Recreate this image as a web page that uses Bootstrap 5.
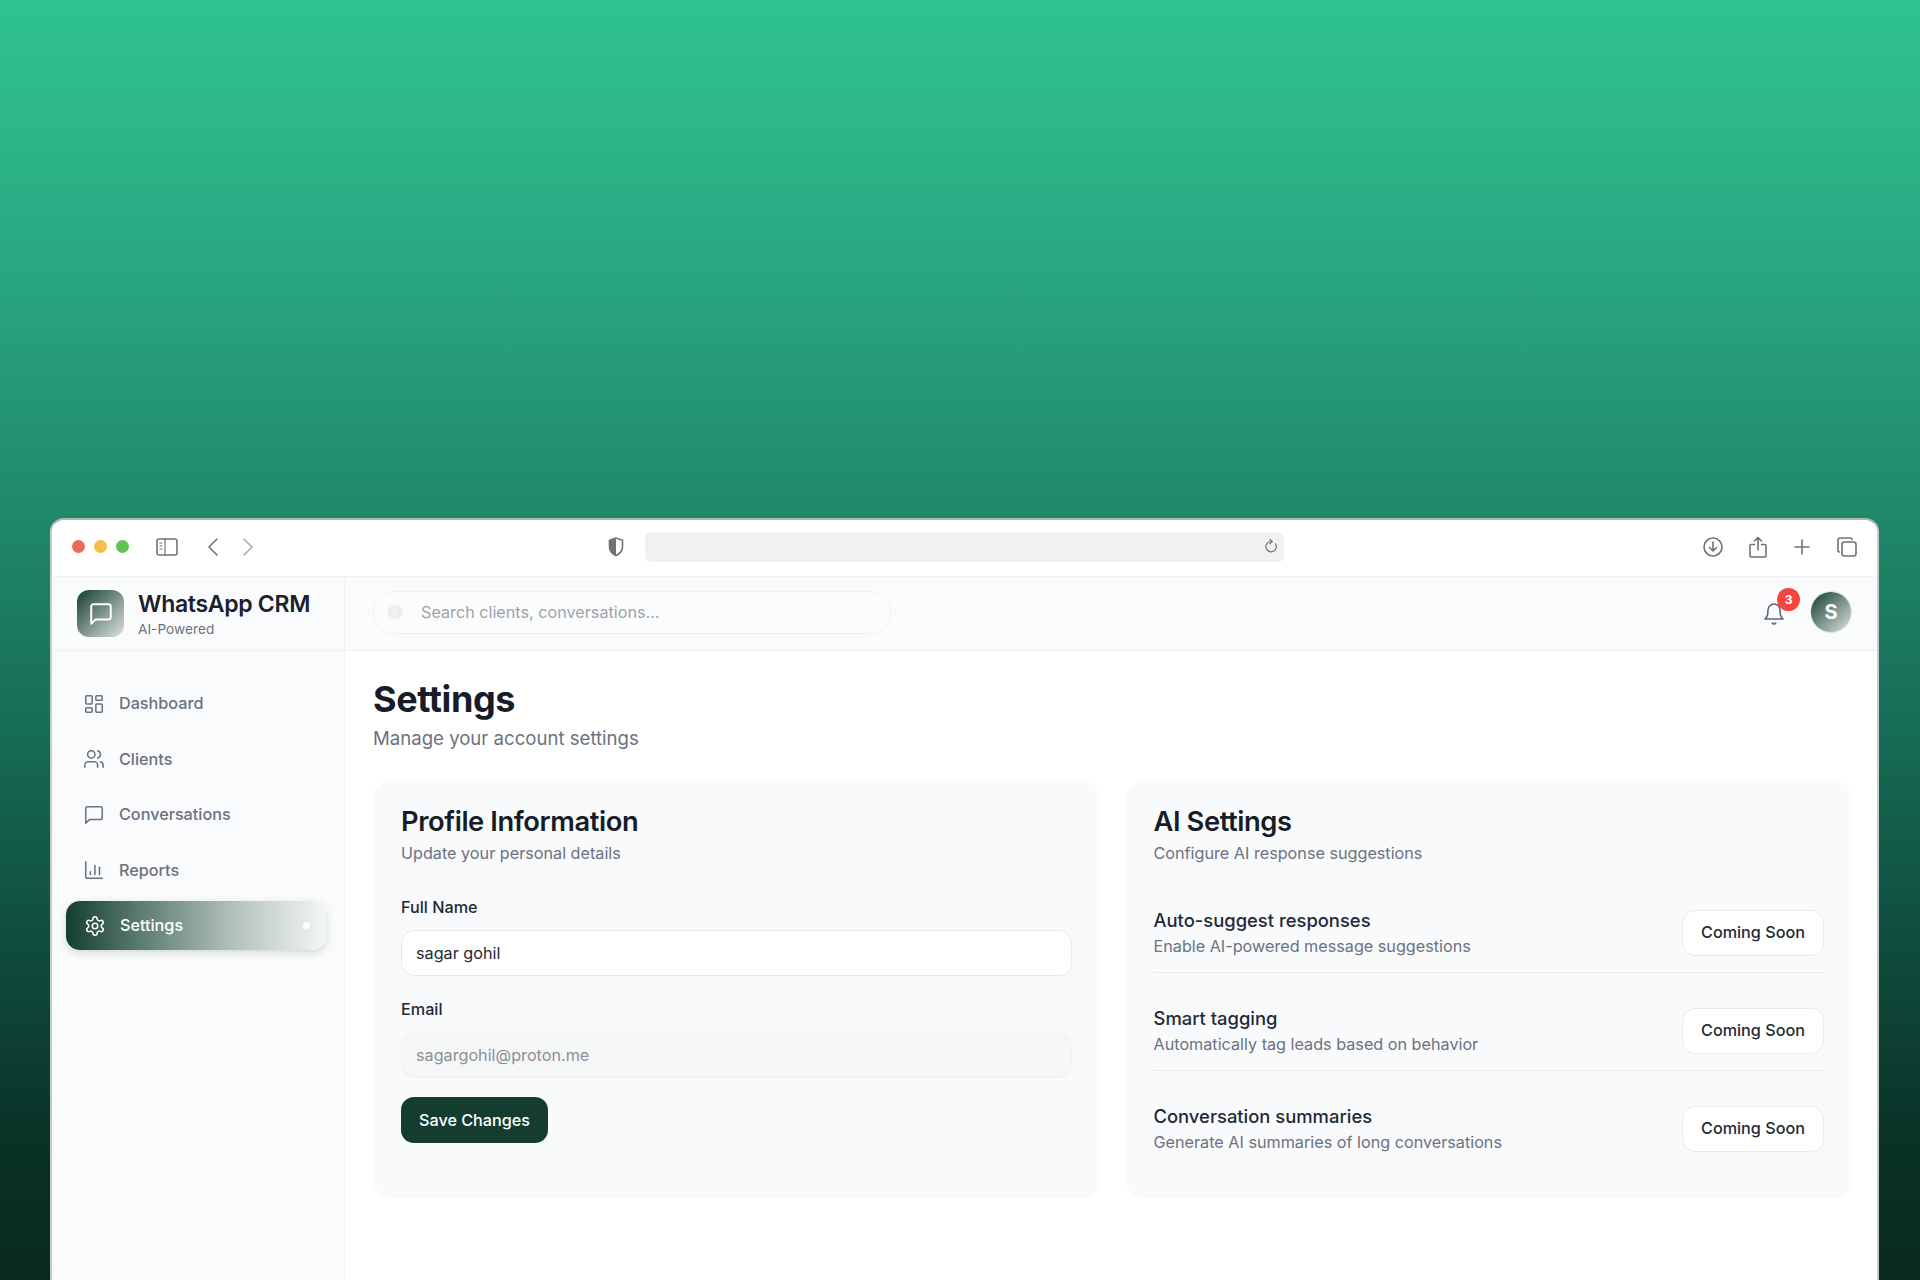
<!DOCTYPE html>
<html lang="en">
<head>
    <meta charset="UTF-8">
    <meta name="viewport" content="width=device-width, initial-scale=1.0">
    <title>Settings - WhatsApp CRM</title>
    <link href="https://cdn.jsdelivr.net/npm/bootstrap@5.3.2/dist/css/bootstrap.min.css" rel="stylesheet">
    <style>
        html, body { height: 1280px; overflow: hidden; }
        body {
            font-family: Inter, "Liberation Sans", sans-serif;
            background: linear-gradient(180deg, #2fc292 0%, #2bb086 15%, #269c78 28%, #1f8769 41%, #176e56 56%, #105040 72%, #0a3328 88%, #09291f 100%);
            padding: 518px 41px 0 50px;
        }
        .browser-win {
            height: 800px;
            background: #fff;
            border: 2px solid #c5cdc9;
            border-top-color: #aeb5b2;
            border-bottom: 0;
            border-radius: 14px 14px 0 0;
            overflow: hidden;
        }
        .title-bar { height: 56px; padding: 0 20px 3px 20px; }
        .dot-light { width: 13px; height: 13px; border-radius: 50%; }
        .dot-gap { margin-left: 9px; }
        .title-left { width: 573px; }
        .url-field { width: 639px; height: 30px; background: #f1f1f1; border-radius: 6px; padding-right: 6px; }
        .tool-icon { stroke: #6f7372; fill: none; stroke-width: 1.6; stroke-linecap: round; stroke-linejoin: round; }
        .side-col { width: 293px; background: #fafbfc; border-right: 1px solid #f1f2f4; }
        .brand-box { height: 75px; padding-left: 25px; gap: 14px; border-bottom: 1px solid #f0f2f4; border-top: 1px solid #f0f2f4; }
        .brand-logo, .user-avatar { background: linear-gradient(135deg, #143d30 0%, #dde3e0 100%); color: #fff; }
        .brand-logo { width: 47px; height: 47px; border-radius: 12px; }
        .brand-text { padding-top: 2px; }
        .brand-name { font-size: 23px; font-weight: 600; color: #1a202c; line-height: 27px; letter-spacing: -.3px; }
        .brand-sub { font-size: 13.7px; color: #6b7280; line-height: 18px; margin-top: 2px; }
        .side-nav { padding: 28px 18px 0 14px; gap: 6.5px; }
        .side-link { height: 49px; padding: 0 16px 0 17px; gap: 14px; font-size: 16.2px; font-weight: 500; color: #6b7280; border-radius: 14px; }
        .side-link svg { width: 22px; height: 22px; stroke: #6b7280; fill: none; stroke-width: 1.7; stroke-linecap: round; stroke-linejoin: round; flex-shrink: 0; }
        .side-link.is-active {
            padding-left: 18px;
            color: #fff;
            background: linear-gradient(90deg, #143d30 0%, #5f7f73 30%, #b4c2bd 65%, #f4f6f5 100%);
            box-shadow: 0 3px 8px rgba(20, 61, 48, .18);
        }
        .side-link.is-active svg { stroke: #fff; }
        .active-dot { width: 7px; height: 7px; border-radius: 50%; background: #fff; }
        .top-bar { height: 75px; background: #fafbfc; padding: 0 26px 3px 28px; border-top: 1px solid #f0f2f4; border-bottom: 1px solid #eceef1; }
        .search-wrap { width: 518px; }
        .search-box { height: 43px; border-radius: 22px; border: 1px solid #f0f1f3; background: #fbfcfc; padding-left: 47px; font-size: 16.2px; box-shadow: none; }
        .search-box::placeholder { color: #9ca3af; }
        .search-glyph { left: 14px; top: 13px; width: 18px; height: 18px; stroke: #e6e8ea; fill: #f1f2f4; stroke-width: 3; filter: blur(1px); }
        .bell-wrap { width: 24px; height: 24px; margin-right: 25px; }
        .bell-wrap svg { width: 24px; height: 24px; stroke: #5d6575; fill: none; stroke-width: 1.6; stroke-linecap: round; stroke-linejoin: round; }
        .bell-count { top: -12px; left: 15px; width: 23px; height: 23px; background: #f2473f; color: #fff; font-size: 12px; font-weight: 700; border-radius: 50%; }
        .user-avatar { width: 40px; height: 40px; border-radius: 50%; font-size: 20px; font-weight: 700; box-shadow: 0 0 0 1px #dfe6e3; }
        .page-body { padding: 27px 25px 0 28px; }
        .page-title { font-size: 36px; font-weight: 700; line-height: 42px; color: #161d29; margin: 0 0 5px; letter-spacing: -.4px; }
        .page-sub { font-size: 18.6px; line-height: 27px; color: #6b7280; margin-bottom: 29px; }
        .cards-row { --bs-gutter-x: 26px; }
        .panel-card { height: 417px; background: #f9fafb; border: 0; border-radius: 18px; padding: 24px 28px; }
        .panel-title { font-size: 27.3px; font-weight: 600; line-height: 34px; color: #161d29; margin: 0 0 2px; letter-spacing: -.4px; }
        .panel-sub { font-size: 16.2px; line-height: 24px; color: #6b7280; }
        .form-area { margin-top: 30px; }
        .field-label { font-size: 16.2px; font-weight: 500; line-height: 24px; color: #1f2937; margin-bottom: 11px; }
        .field-label-next { margin-top: 21px; }
        .field-input { height: 46px; border-radius: 13px; border-color: #e7e9ec; padding: 0 14px; font-size: 16.2px; color: #1f2937; background: #fff; }
        .field-input[readonly] { background: #f5f6f6; color: #8b9097; border-color: #f0f1f2; }
        .save-btn { width: 147px; height: 46px; margin-top: 19px; background: #143d30; border: 0; border-radius: 13px; color: #fff; font-size: 16.2px; font-weight: 500; padding: 0; }
        .pref-list { margin-top: 43px; }
        .pref-row { height: 49px; }
        .pref-sep { border-top: 1px solid #e8eaed; margin: 15px 0 33px; opacity: 1; }
        .pref-name { font-size: 18.4px; font-weight: 500; line-height: 25px; color: #1f2937; }
        .pref-desc { font-size: 16.2px; line-height: 24px; margin-top: 1px; color: #6b7280; }
        .soon-btn { width: 142px; height: 46px; background: #fff; border: 1px solid #e8eaed; border-radius: 13px; color: #1f2937; font-size: 16.2px; font-weight: 500; padding: 0; }
    </style>
</head>
<body>
    <div class="browser-win d-flex flex-column">
        <!-- safari style toolbar -->
        <div class="title-bar d-flex align-items-center flex-shrink-0">
            <div class="title-left d-flex align-items-center">
                <span class="dot-light" style="background:#ee6a5f"></span>
                <span class="dot-light dot-gap" style="background:#f5bd4f"></span>
                <span class="dot-light dot-gap" style="background:#61c554"></span>
                <svg class="tool-icon" style="margin-left:27px" width="22" height="18" viewBox="0 0 22 18"><rect x="1" y="1" width="20" height="16" rx="2"/><path d="M9 1v16M4 5h2M4 8h2M4 11h2" stroke-width="1.2"/></svg>
                <svg class="tool-icon" style="margin-left:29px" width="12" height="20" viewBox="0 0 12 20"><path d="M10 2 2 10l8 8"/></svg>
                <svg class="tool-icon" style="margin-left:23px;stroke:#a9acab" width="12" height="20" viewBox="0 0 12 20"><path d="m2 2 8 8-8 8"/></svg>
                <svg class="ms-auto" style="margin-right:21px" width="16" height="20" viewBox="0 0 16 20"><path d="M8 1 1.5 3.2v6.3c0 4.4 3 7.6 6.5 9 3.5-1.4 6.5-4.6 6.5-9V3.2z" fill="#fff" stroke="#6f7372" stroke-width="1.6"/><path d="M8 1 1.5 3.2v6.3c0 4.4 3 7.6 6.5 9z" fill="#6f7372"/></svg>
            </div>
            <div class="url-field d-flex align-items-center justify-content-end">
                <svg class="tool-icon" width="14" height="16" viewBox="0 0 14 16"><path d="M6 2.5a5.2 5.2 0 1 0 5.500 2.300M6 .5l2.200 2L6 4.500" stroke-width="1.2"/></svg>
            </div>
            <div class="ms-auto d-flex align-items-center">
                <svg class="tool-icon" width="20" height="20" viewBox="0 0 20 20"><circle cx="10" cy="10" r="9"/><path d="M10 5v9M6.500 10.500 10 14l3.500-3.500"/></svg>
                <svg class="tool-icon" style="margin-left:26px" width="18" height="22" viewBox="0 0 18 22"><path d="M5.500 8.500H2a1 1 0 0 0-1 1V20a1 1 0 0 0 1 1h14a1 1 0 0 0 1-1V9.500a1 1 0 0 0-1-1h-3.500M9 14V1.500M5.500 5 9 1.500 12.500 5"/></svg>
                <svg class="tool-icon" style="margin-left:27px" width="16" height="16" viewBox="0 0 16 16"><path d="M8 1v14M1 8h14"/></svg>
                <svg class="tool-icon" style="margin-left:27px" width="20" height="20" viewBox="0 0 20 20"><rect x="5" y="5" width="14" height="14" rx="2.500"/><path d="M15 2.500A1.500 1.500 0 0 0 13.500 1H3a2 2 0 0 0-2 2v10.500A1.500 1.500 0 0 0 2.500 15"/></svg>
            </div>
        </div>

        <div class="d-flex flex-grow-1">
            <!-- sidebar -->
            <div class="side-col flex-shrink-0">
                <div class="brand-box d-flex align-items-center">
                    <div class="brand-logo d-flex align-items-center justify-content-center">
                        <svg width="26" height="26" viewBox="0 0 24 24" fill="none" stroke="#fff" stroke-width="1.8" stroke-linejoin="round"><path d="M21 15a2 2 0 0 1-2 2H7l-4 4V5a2 2 0 0 1 2-2h14a2 2 0 0 1 2 2z"/></svg>
                    </div>
                    <div class="brand-text">
                        <div class="brand-name">WhatsApp CRM</div>
                        <div class="brand-sub">AI-Powered</div>
                    </div>
                </div>
                <nav class="nav flex-column side-nav">
                    <a class="nav-link side-link d-flex align-items-center" href="#">
                        <svg viewBox="0 0 24 24"><rect x="3" y="3" width="7" height="9" rx="1"/><rect x="14" y="3" width="7" height="5" rx="1"/><rect x="14" y="12" width="7" height="9" rx="1"/><rect x="3" y="16" width="7" height="5" rx="1"/></svg>
                        Dashboard
                    </a>
                    <a class="nav-link side-link d-flex align-items-center" href="#">
                        <svg viewBox="0 0 24 24"><path d="M16 21v-2a4 4 0 0 0-4-4H6a4 4 0 0 0-4 4v2"/><circle cx="9" cy="7" r="4"/><path d="M22 21v-2a4 4 0 0 0-3-3.870"/><path d="M16 3.130a4 4 0 0 1 0 7.750"/></svg>
                        Clients
                    </a>
                    <a class="nav-link side-link d-flex align-items-center" href="#">
                        <svg viewBox="0 0 24 24"><path d="M21 15a2 2 0 0 1-2 2H7l-4 4V5a2 2 0 0 1 2-2h14a2 2 0 0 1 2 2z"/></svg>
                        Conversations
                    </a>
                    <a class="nav-link side-link d-flex align-items-center" href="#">
                        <svg viewBox="0 0 24 24"><path d="M3 3v16a2 2 0 0 0 2 2h16"/><path d="M8 17v-3"/><path d="M13 17V7"/><path d="M18 17V9"/></svg>
                        Reports
                    </a>
                    <a class="nav-link side-link is-active d-flex align-items-center" href="#">
                        <svg viewBox="0 0 24 24"><path d="M12.220 2h-.44a2 2 0 0 0-2 2v.18a2 2 0 0 1-1 1.730l-.43.25a2 2 0 0 1-2 0l-.15-.08a2 2 0 0 0-2.730.73l-.22.38a2 2 0 0 0 .73 2.730l.15.1a2 2 0 0 1 1 1.720v.51a2 2 0 0 1-1 1.740l-.15.09a2 2 0 0 0-.73 2.730l.22.38a2 2 0 0 0 2.730.73l.15-.08a2 2 0 0 1 2 0l.43.25a2 2 0 0 1 1 1.730V20a2 2 0 0 0 2 2h.44a2 2 0 0 0 2-2v-.18a2 2 0 0 1 1-1.730l.43-.25a2 2 0 0 1 2 0l.15.08a2 2 0 0 0 2.730-.73l.22-.39a2 2 0 0 0-.73-2.730l-.15-.08a2 2 0 0 1-1-1.740v-.5a2 2 0 0 1 1-1.740l.15-.09a2 2 0 0 0 .73-2.730l-.22-.38a2 2 0 0 0-2.730-.73l-.15.08a2 2 0 0 1-2 0l-.43-.25a2 2 0 0 1-1-1.730V4a2 2 0 0 0-2-2z"/><circle cx="12" cy="12" r="3"/></svg>
                        Settings
                        <span class="active-dot ms-auto"></span>
                    </a>
                </nav>
            </div>

            <!-- main -->
            <div class="flex-grow-1">
                <div class="top-bar d-flex align-items-center">
                    <div class="search-wrap position-relative">
                        <svg class="search-glyph position-absolute" viewBox="0 0 24 24"><circle cx="11" cy="11" r="8"/></svg>
                        <input type="text" class="form-control search-box" placeholder="Search clients, conversations...">
                    </div>
                    <div class="ms-auto d-flex align-items-center">
                        <div class="bell-wrap position-relative">
                            <svg viewBox="0 0 24 24"><path d="M6 8a6 6 0 0 1 12 0c0 7 3 9 3 9H3s3-2 3-9"/><path d="M10.300 21a1.940 1.940 0 0 0 3.400 0"/></svg>
                            <span class="bell-count position-absolute d-flex align-items-center justify-content-center">3</span>
                        </div>
                        <div class="user-avatar d-flex align-items-center justify-content-center">S</div>
                    </div>
                </div>
                <div class="page-body">
                    <h1 class="page-title">Settings</h1>
                    <p class="page-sub">Manage your account settings</p>
                    <div class="row cards-row">
                        <div class="col-6">
                            <div class="card panel-card">
                                <h2 class="panel-title">Profile Information</h2>
                                <div class="panel-sub">Update your personal details</div>
                                <form class="form-area">
                                    <label class="form-label field-label d-block">Full Name</label>
                                    <input type="text" class="form-control field-input" value="sagar gohil">
                                    <label class="form-label field-label field-label-next d-block">Email</label>
                                    <input type="email" class="form-control field-input" value="sagargohil@proton.me" readonly>
                                    <button type="button" class="btn save-btn">Save Changes</button>
                                </form>
                            </div>
                        </div>
                        <div class="col-6">
                            <div class="card panel-card">
                                <h2 class="panel-title">AI Settings</h2>
                                <div class="panel-sub">Configure AI response suggestions</div>
                                <div class="pref-list">
                                    <div class="pref-row d-flex align-items-center justify-content-between">
                                        <div>
                                            <div class="pref-name">Auto-suggest responses</div>
                                            <div class="pref-desc">Enable AI-powered message suggestions</div>
                                        </div>
                                        <button type="button" class="btn soon-btn">Coming Soon</button>
                                    </div>
                                    <hr class="pref-sep">
                                    <div class="pref-row d-flex align-items-center justify-content-between">
                                        <div>
                                            <div class="pref-name">Smart tagging</div>
                                            <div class="pref-desc">Automatically tag leads based on behavior</div>
                                        </div>
                                        <button type="button" class="btn soon-btn">Coming Soon</button>
                                    </div>
                                    <hr class="pref-sep">
                                    <div class="pref-row d-flex align-items-center justify-content-between">
                                        <div>
                                            <div class="pref-name">Conversation summaries</div>
                                            <div class="pref-desc">Generate AI summaries of long conversations</div>
                                        </div>
                                        <button type="button" class="btn soon-btn">Coming Soon</button>
                                    </div>
                                </div>
                            </div>
                        </div>
                    </div>
                </div>
            </div>
        </div>
    </div>

    <script src="https://cdn.jsdelivr.net/npm/bootstrap@5.3.2/dist/js/bootstrap.bundle.min.js"></script>
</body>
</html>
